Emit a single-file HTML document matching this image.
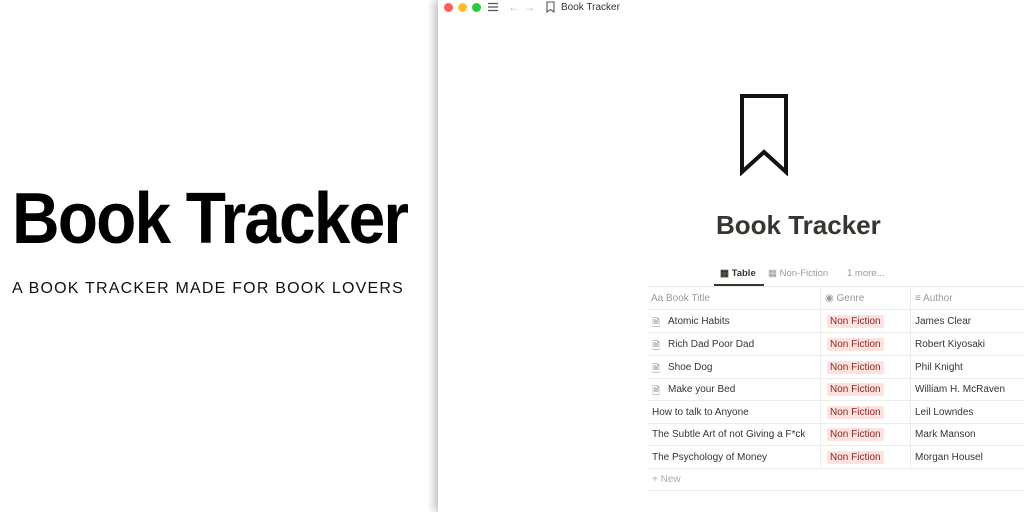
<!DOCTYPE html>
<html><head><meta charset="utf-8"><style>
*{margin:0;padding:0;box-sizing:border-box}
body{width:1024px;height:512px;overflow:hidden;background:#fff;font-family:"Liberation Sans",sans-serif;position:relative}
.t{position:absolute;left:12px;top:178px;font-size:72px;font-weight:bold;color:#000;letter-spacing:-2px;white-space:nowrap;transform-origin:left top}
.s{position:absolute;left:12px;top:280px;font-size:16px;letter-spacing:1.2px;color:#111;white-space:nowrap}
.win{position:absolute;left:438px;top:0;width:600px;height:512px;background:#fff;box-shadow:-4px 0 8px rgba(0,0,0,.25)}
.abs{position:absolute}
.dot{position:absolute;top:3px;width:9px;height:9px;border-radius:50%}
.row{position:absolute;left:647px;width:377px;height:23px;border-bottom:1px solid #ececea;font-size:10px;color:#37352f}
.row span{position:absolute;top:6px;white-space:nowrap}
.tag{background:#fde2e0;color:#8b2a22;padding:1px 3px;border-radius:2px;top:5px!important}
.vl{position:absolute;top:286px;height:182px;width:1px;background:#ececea}
</style></head><body>
<div class="t" id="t">Book Tracker</div>
<div class="s">A BOOK TRACKER MADE FOR BOOK LOVERS</div>
<div class="win"></div>
<div class="dot" style="left:444px;background:#fe5f57"></div>
<div class="dot" style="left:458px;background:#febc2e"></div>
<div class="dot" style="left:472px;background:#28c840"></div>
<svg class="abs" style="left:487px;top:2px" width="12" height="10"><path d="M1 1.5h10M1 5h10M1 8.5h10" stroke="#555" stroke-width="1.2"/></svg>
<div class="abs" style="left:508px;top:0;font-size:12px;color:#bbb">← →</div>
<svg class="abs" style="left:546px;top:1px" width="9" height="12"><path d="M1 1h7v10l-3.5-2.5L1 11z" fill="none" stroke="#555" stroke-width="1.1"/></svg>
<div class="abs" style="left:561px;top:2px;font-size:10px;color:#333">Book Tracker</div>
<svg class="abs" style="left:739px;top:94px" width="50" height="82"><path d="M3 2h44v76L25 58 3 78z" fill="none" stroke="#111" stroke-width="4" stroke-linejoin="miter"/></svg>
<div class="abs" style="left:716px;top:210px;font-size:26px;font-weight:bold;color:#37352f">Book Tracker</div>
<div class="abs" style="left:720px;top:268px;font-size:9.5px;color:#37352f;font-weight:bold">▦ Table</div>
<div class="abs" style="left:768px;top:268px;font-size:9.5px;color:#999">▦ Non-Fiction</div>
<div class="abs" style="left:847px;top:268px;font-size:9.5px;color:#999">1 more...</div>
<div class="abs" style="left:714px;top:284px;width:50px;height:2px;background:#37352f"></div>
<div class="abs" style="left:647px;top:286px;width:377px;height:1px;background:#ececea"></div>
<div class="row" style="top:287px;color:#999"><span style="left:4px">Aa Book Title</span><span style="left:178px">◉ Genre</span><span style="left:268px">≡ Author</span></div>
<div class="row" style="top:310px"><span style="left:5px;color:#888">🗎</span><span style="left:21px">Atomic Habits</span><span class="tag" style="left:180px">Non Fiction</span><span style="left:268px">James Clear</span></div>
<div class="row" style="top:333px"><span style="left:5px;color:#888">🗎</span><span style="left:21px">Rich Dad Poor Dad</span><span class="tag" style="left:180px">Non Fiction</span><span style="left:268px">Robert Kiyosaki</span></div>
<div class="row" style="top:356px"><span style="left:5px;color:#888">🗎</span><span style="left:21px">Shoe Dog</span><span class="tag" style="left:180px">Non Fiction</span><span style="left:268px">Phil Knight</span></div>
<div class="row" style="top:378px"><span style="left:5px;color:#888">🗎</span><span style="left:21px">Make your Bed</span><span class="tag" style="left:180px">Non Fiction</span><span style="left:268px">William H. McRaven</span></div>
<div class="row" style="top:401px"><span style="left:5px">How to talk to Anyone</span><span class="tag" style="left:180px">Non Fiction</span><span style="left:268px">Leil Lowndes</span></div>
<div class="row" style="top:423px"><span style="left:5px">The Subtle Art of not Giving a F*ck</span><span class="tag" style="left:180px">Non Fiction</span><span style="left:268px">Mark Manson</span></div>
<div class="row" style="top:446px"><span style="left:5px">The Psychology of Money</span><span class="tag" style="left:180px">Non Fiction</span><span style="left:268px">Morgan Housel</span></div>
<div class="row" style="top:468px;color:#aaa"><span style="left:5px">+ New</span></div>
<div class="vl" style="left:820px"></div><div class="vl" style="left:910px"></div>
<script>var t=document.getElementById('t');t.style.transform='scaleX('+(395/t.offsetWidth)+')';</script>
</body></html>
